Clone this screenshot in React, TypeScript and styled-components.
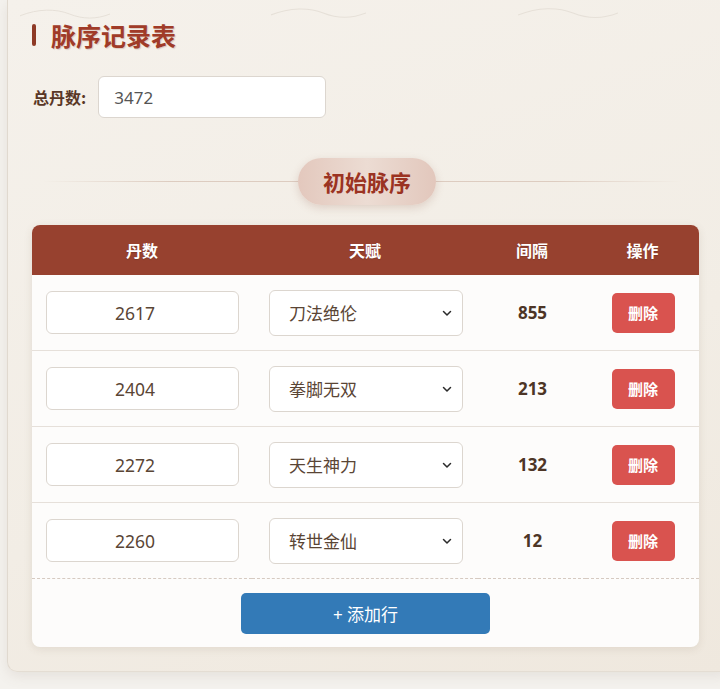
import React from 'react';
import styled, { createGlobalStyle } from 'styled-components';

const GlobalStyle = createGlobalStyle`
  html, body {
    margin: 0;
    padding: 0;
    background: #f4f2ee;
    overflow: hidden;
    font-family: "Noto Sans", "Noto Sans CJK SC", sans-serif;
  }

  input[type='number']::-webkit-inner-spin-button {
    opacity: 0;
  }
`;

const Page = styled.div`
  width: 720px;
  height: 689px;
  padding-left: 7px;
  box-sizing: border-box;
`;

const Panel = styled.div`
  position: relative;
  width: 720px;
  box-sizing: border-box;
  padding: 20px 25px 24px 24px;
  background: linear-gradient(160deg, #f5f1eb 0%, #f2ede5 60%, #efe8de 100%);
  border-left: 1px solid #e0d9cf;
  border-bottom: 1px solid #e4ddd3;
  border-bottom-left-radius: 10px;
  box-shadow: 0 4px 14px rgba(120, 100, 80, 0.12);
  overflow: hidden;
`;

const Wave = styled.svg<{ $left: number; $top: number }>`
  position: absolute;
  left: ${({ $left }) => $left}px;
  top: ${({ $top }) => $top}px;
  pointer-events: none;
`;

const TitleRow = styled.div`
  display: flex;
  align-items: center;
  gap: 15px;
  height: 30px;
`;

const TitleBar = styled.span`
  width: 4px;
  height: 22px;
  border-radius: 2px;
  background: #8e3a26;
`;

const Title = styled.h1`
  margin: 0;
  font-family: "Noto Sans CJK SC", sans-serif;
  font-size: 25px;
  font-weight: 700;
  color: #a03b28;
  text-shadow: 1px 1px 1px rgba(120, 50, 30, 0.2);
`;

const TotalRow = styled.div`
  display: flex;
  align-items: center;
  gap: 12px;
  margin-top: 26px;
  padding-left: 1px;
`;

const TotalLabel = styled.label`
  font-family: "Noto Sans CJK SC", sans-serif;
  font-size: 16px;
  font-weight: 700;
  color: #5a3726;
`;

const TotalInput = styled.input`
  width: 228px;
  height: 42px;
  box-sizing: border-box;
  padding: 0 15px;
  border: 1px solid #dcd6cf;
  border-radius: 6px;
  background: #fff;
  font-family: "Noto Sans", "Noto Sans CJK SC", sans-serif;
  font-size: 17px;
  color: #555;
  outline: none;
`;

const Section = styled.div`
  position: relative;
  display: flex;
  justify-content: center;
  align-items: center;
  margin-top: 39px;
  height: 48px;

  &::before {
    content: '';
    position: absolute;
    left: 10px;
    right: 20px;
    top: 50%;
    height: 1px;
    background: linear-gradient(90deg, rgba(200, 180, 165, 0) 0%, #ddccc0 20%, #ddccc0 80%, rgba(200, 180, 165, 0) 100%);
  }
`;

const SectionPill = styled.div`
  position: relative;
  padding: 0 25px;
  height: 47px;
  line-height: 47px;
  border-radius: 24px;
  background: linear-gradient(90deg, #e3c8bd 0%, #ecdcd3 50%, #e2c7bc 100%);
  box-shadow: 0 3px 8px rgba(150, 100, 80, 0.22);
  font-family: "Noto Sans CJK SC", sans-serif;
  font-size: 22px;
  font-weight: 700;
  color: #9b3322;
`;

const Card = styled.div`
  margin-top: 20px;
  width: 667px;
  background: #fdfcfb;
  border-radius: 8px;
  box-shadow: 0 2px 8px rgba(110, 80, 60, 0.12);
  overflow: hidden;
`;

const Table = styled.table`
  width: 100%;
  border-collapse: collapse;
  table-layout: fixed;
`;

const HeadCell = styled.th<{ $w: number }>`
  width: ${({ $w }) => $w}px;
  height: 50px;
  padding: 0;
  background: #97412f;
  color: #fff;
  font-family: "Noto Sans CJK SC", sans-serif;
  font-size: 16px;
  font-weight: 700;
  text-align: center;
  text-shadow: 0 1px 1px rgba(0, 0, 0, 0.15);
`;

const Row = styled.tr<{ $last?: boolean }>`
  border-bottom: ${({ $last }) => ($last ? '1px dashed #d6cac1' : '1px solid #e6e0da')};
`;

const Cell = styled.td`
  height: 75px;
  padding: 0 13px 0 14px;
  text-align: center;
  vertical-align: middle;
`;

const NumInput = styled.input`
  width: 100%;
  height: 43px;
  box-sizing: border-box;
  padding: 0 4px;
  border: 1px solid #dcd6cf;
  border-radius: 6px;
  background: #fff;
  text-align: center;
  font-family: "Noto Sans", "Noto Sans CJK SC", sans-serif;
  font-size: 17.5px;
  color: #5a4535;
  outline: none;
`;

const SelectWrap = styled.div`
  position: relative;
  padding-left: 3px;
  padding-right: 2px;
`;

const Select = styled.select`
  width: 100%;
  height: 46px;
  box-sizing: border-box;
  appearance: none;
  padding: 0 30px 0 19px;
  border: 1px solid #dcd6cf;
  border-radius: 6px;
  background: #fff;
  font-family: "Noto Sans CJK SC", sans-serif;
  font-size: 17px;
  color: #5a4535;
  outline: none;
`;

const Chevron = styled.svg`
  position: absolute;
  right: 12px;
  top: 50%;
  transform: translateY(-50%);
  pointer-events: none;
`;

const Gap = styled.span`
  font-family: "Noto Sans", sans-serif;
  font-size: 17px;
  font-weight: 700;
  color: #4d3526;
`;

const DeleteButton = styled.button`
  width: 63px;
  height: 40px;
  border: none;
  border-radius: 5px;
  background: #d9534f;
  color: #fff;
  font-family: "Noto Sans CJK SC", sans-serif;
  font-size: 15px;
  font-weight: 700;
  cursor: pointer;
`;

const Footer = styled.div`
  display: flex;
  justify-content: center;
  padding: 14px 0 13px;
`;

const AddButton = styled.button`
  width: 249px;
  height: 41px;
  border: none;
  border-radius: 5px;
  background: #337ab7;
  color: #fff;
  font-family: "Noto Sans", "Noto Sans CJK SC", sans-serif;
  font-size: 17px;
  cursor: pointer;
`;

const talents = ['刀法绝伦', '拳脚无双', '天生神力', '转世金仙'];

const rows = [
  { dan: 2617, talent: '刀法绝伦', gap: 855 },
  { dan: 2404, talent: '拳脚无双', gap: 213 },
  { dan: 2272, talent: '天生神力', gap: 132 },
  { dan: 2260, talent: '转世金仙', gap: 12 },
];

const WaveLine: React.FC<{ left: number; top: number; width: number }> = ({ left, top, width }) => (
  <Wave $left={left} $top={top} width={width} height="16" viewBox="0 0 100 16">
    <path d="M0 10 C 20 2, 40 2, 55 8 S 85 14, 100 8" fill="none" stroke="#e6e0d8" strokeWidth="1.1" />
  </Wave>
);

const App: React.FC = () => {
  return (
    <Page>
      <GlobalStyle />
      <Panel>
        <WaveLine left={12} top={6} width={90} />
        <WaveLine left={263} top={5} width={95} />
        <WaveLine left={510} top={5} width={100} />

        <TitleRow>
          <TitleBar />
          <Title>脉序记录表</Title>
        </TitleRow>

        <TotalRow>
          <TotalLabel>总丹数:</TotalLabel>
          <TotalInput defaultValue="3472" />
        </TotalRow>

        <Section>
          <SectionPill>初始脉序</SectionPill>
        </Section>

        <Card>
          <Table>
            <thead>
              <tr>
                <HeadCell $w={220}>丹数</HeadCell>
                <HeadCell $w={226}>天赋</HeadCell>
                <HeadCell $w={108}>间隔</HeadCell>
                <HeadCell $w={113}>操作</HeadCell>
              </tr>
            </thead>
            <tbody>
              {rows.map((r, i) => (
                <Row key={r.dan} $last={i === rows.length - 1}>
                  <Cell>
                    <NumInput type="number" defaultValue={r.dan} />
                  </Cell>
                  <Cell>
                    <SelectWrap>
                      <Select defaultValue={r.talent}>
                        {talents.map((t) => (
                          <option key={t} value={t}>
                            {t}
                          </option>
                        ))}
                      </Select>
                      <Chevron width="12" height="12" viewBox="0 0 12 12">
                        <path d="M2.5 4.5 L6 8 L9.5 4.5" fill="none" stroke="#2a2a2a" strokeWidth="1.5" strokeLinecap="round" strokeLinejoin="round" />
                      </Chevron>
                    </SelectWrap>
                  </Cell>
                  <Cell>
                    <Gap>{r.gap}</Gap>
                  </Cell>
                  <Cell>
                    <DeleteButton>删除</DeleteButton>
                  </Cell>
                </Row>
              ))}
            </tbody>
          </Table>
          <Footer>
            <AddButton>+ 添加行</AddButton>
          </Footer>
        </Card>
      </Panel>
    </Page>
  );
};

export default App;
